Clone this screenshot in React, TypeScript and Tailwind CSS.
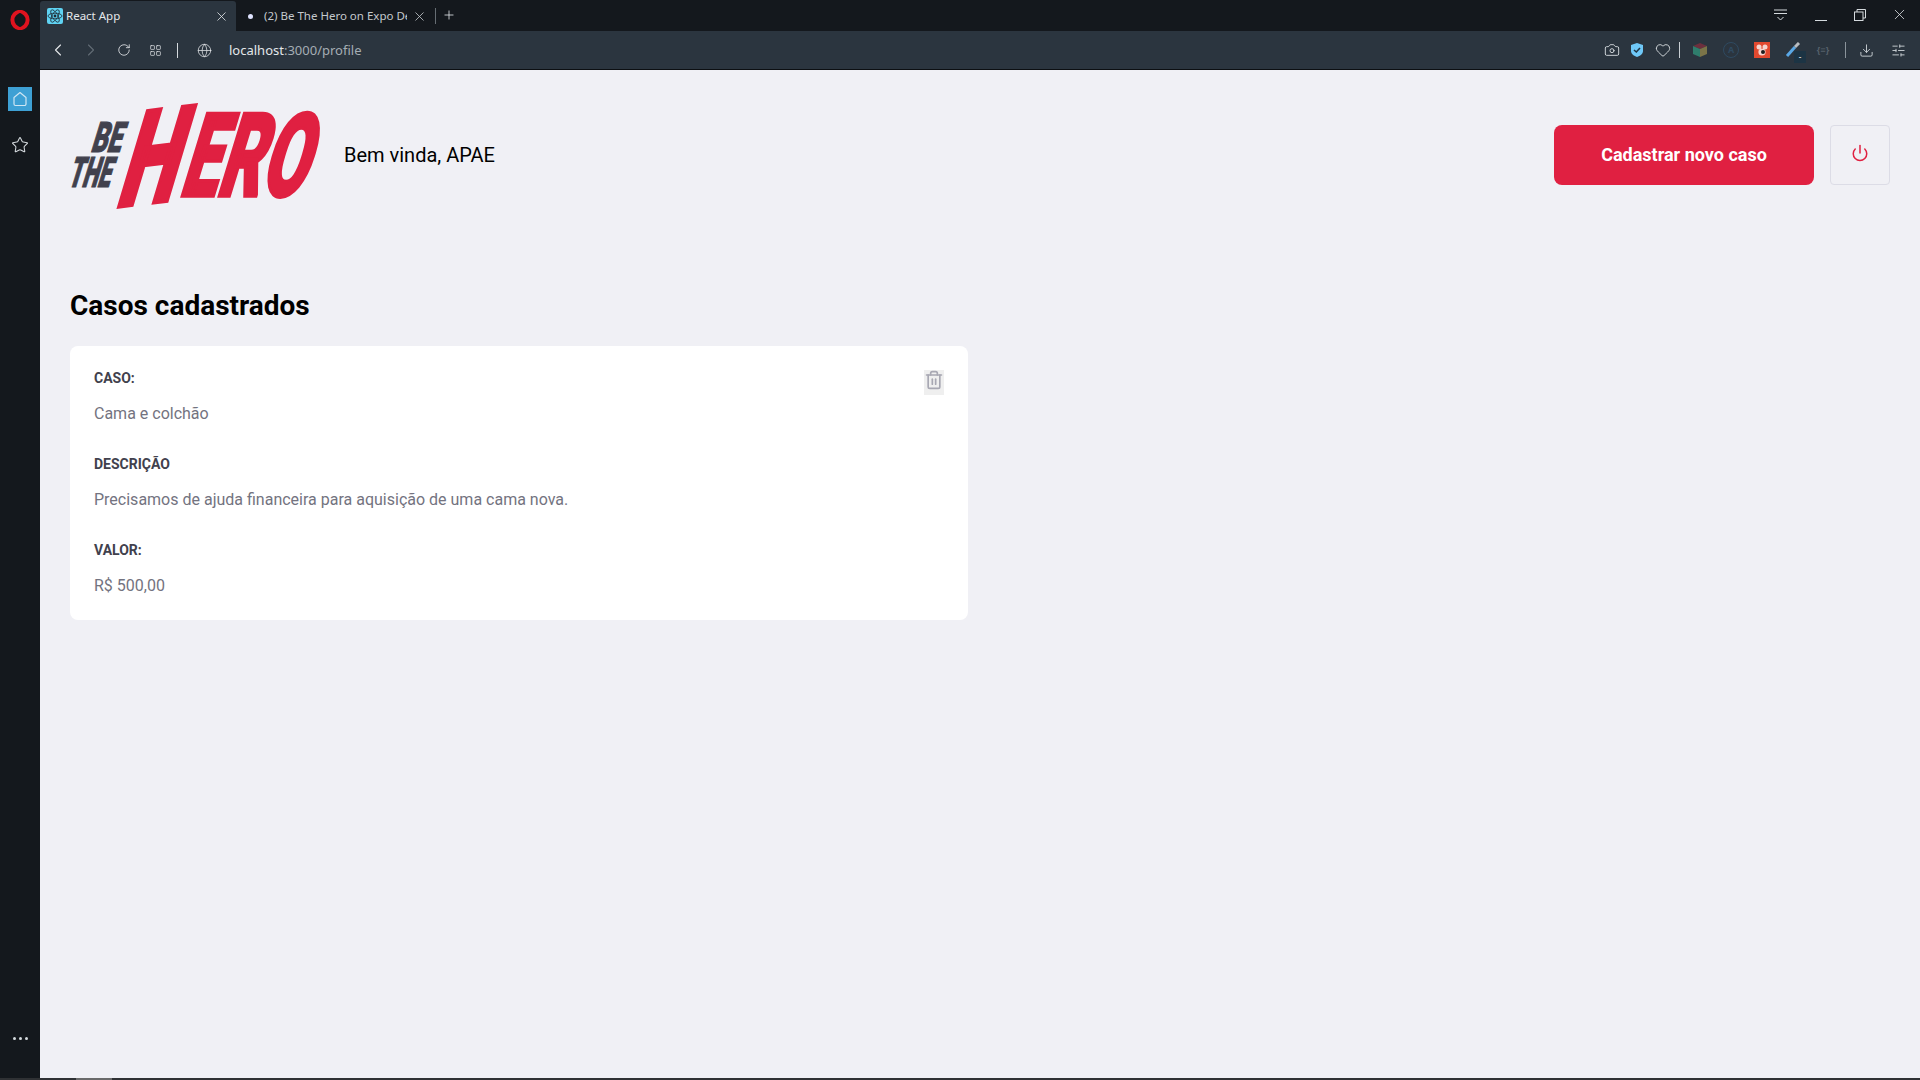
import React from "react";
import { FiPower, FiTrash2 } from "react-icons/fi";
import {
  Camera,
  ChevronLeft,
  ChevronRight,
  Download,
  Globe,
  Heart,
  LayoutGrid,
  Plus,
  RotateCw,
  SlidersHorizontal,
  Star,
  X,
} from "lucide-react";

const OperaLogo = () => (
  <svg width="20" height="20" viewBox="0 0 20 20">
    <ellipse cx="10" cy="10" rx="7.6" ry="8.2" fill="none" stroke="#e0131f" strokeWidth="4" />
    <ellipse cx="10" cy="10" rx="3.6" ry="7" fill="#14181d" />
  </svg>
);

const ReactFavicon = () => (
  <svg width="16" height="16" viewBox="0 0 16 16">
    <rect width="16" height="16" rx="2" fill="#5fd3f3" />
    <g fill="none" stroke="#1e2a33" strokeWidth="0.8">
      <ellipse cx="8" cy="8" rx="7" ry="2.8" />
      <ellipse cx="8" cy="8" rx="7" ry="2.8" transform="rotate(60 8 8)" />
      <ellipse cx="8" cy="8" rx="7" ry="2.8" transform="rotate(120 8 8)" />
    </g>
    <circle cx="8" cy="8" r="1.4" fill="#1e2a33" />
  </svg>
);

const Logo = () => (
  <svg width="250" height="110" viewBox="0 0 250 110" className="shrink-0 overflow-visible">
    <g fontFamily="Roboto, sans-serif" fontWeight="900">
      <text transform="translate(20 52) skewX(-17)" fontSize="42" fill="#41414d" stroke="#41414d" strokeWidth="1.2" textLength="30" lengthAdjust="spacingAndGlyphs">
        BE
      </text>
      <text transform="translate(-3 87) skewX(-17)" fontSize="42" fill="#41414d" stroke="#41414d" strokeWidth="1.2" textLength="42" lengthAdjust="spacingAndGlyphs">
        THE
      </text>
      <text transform="matrix(1 -0.12 -0.3 1 44 107)" fontSize="134" fill="#e02041" stroke="#e02041" strokeWidth="4.5" textLength="58" lengthAdjust="spacingAndGlyphs">
        H
      </text>
      <text transform="translate(108 96) skewX(-17)" fontSize="116" fill="#e02041" stroke="#e02041" strokeWidth="3.5" textLength="126" lengthAdjust="spacingAndGlyphs">
        ERO
      </text>
    </g>
  </svg>
);

const ExtensionIcons = () => (
  <div className="flex items-center">
    <Camera size={16} strokeWidth={1.4} className="text-[#d5dade]" />
    <svg width="14" height="16" viewBox="0 0 14 16" className="ml-[10px]">
      <path d="M7 1 L13 3 V9 C13 12 10 14 7 15 C4 14 1 12 1 9 V3 Z" fill="#6fc8f7" />
      <path d="M4 8 L6.3 10 L10 6" fill="none" stroke="#1f3545" strokeWidth="1.6" />
    </svg>
    <Heart size={16} strokeWidth={1.4} className="ml-[11px] text-[#d5dade]" />
    <div className="ml-[8px] h-[16px] w-px bg-[#c8ced3]" />
    <svg width="16" height="16" viewBox="0 0 16 16" className="ml-[12px]">
      <path d="M8 1 L15 4 L8 7 L1 4 Z" fill="#6d2f3d" />
      <path d="M1 4 L8 7 V15 L1 12 Z" fill="#2f7d6c" />
      <path d="M15 4 L8 7 V15 L15 12 Z" fill="#7a7448" />
    </svg>
    <div className="ml-[15px] flex h-[16px] w-[16px] items-center justify-center rounded-full border border-[#2f4a61] text-[9px] font-bold text-[#2f4a61]">
      A
    </div>
    <svg width="16" height="16" viewBox="0 0 16 16" className="ml-[15px]">
      <rect width="16" height="16" fill="#e2492f" />
      <circle cx="5" cy="5" r="2.5" fill="#f5d5cf" />
      <circle cx="11" cy="5" r="2.5" fill="#f5d5cf" />
      <circle cx="8" cy="10" r="3.6" fill="#f5d5cf" />
      <circle cx="9" cy="10" r="2" fill="#1d1d1d" />
    </svg>
    <div className="relative ml-[15px] h-[16px] w-[16px]">
      <svg width="16" height="16" viewBox="0 0 16 16">
        <path d="M2 14 L10 5" stroke="#5aa8e6" strokeWidth="3" />
        <path d="M10 5 L14 1" stroke="#b8bcc0" strokeWidth="3" />
      </svg>
      <div className="absolute left-[9px] top-[9px] flex h-[12px] w-[12px] items-center justify-center bg-[#1c3444] text-[8px] leading-none text-white">
        -
      </div>
    </div>
    <span className="ml-[15px] w-[14px] text-center text-[9px] font-bold text-[#56616b]">{"{≡}"}</span>
    <div className="ml-[15px] h-[16px] w-px bg-[#8b949b]" />
    <Download size={15} strokeWidth={1.4} className="ml-[13px] text-[#d5dade]" />
    <SlidersHorizontal size={15} strokeWidth={1.4} className="ml-[17px] text-[#d5dade]" />
  </div>
);

const BrowserChrome = () => (
  <div className="font-['Noto_Sans',sans-serif] text-[#e4e7ea]">
    <div className="flex h-[31px] items-end bg-[#14181d]">
      <div className="flex h-[30px] w-[196px] items-center rounded-t-[3px] bg-[#2b353f] pl-[7px] pr-[7px] text-[11.5px]">
        <ReactFavicon />
        <span className="ml-[3px] flex-1">React App</span>
        <X size={15} strokeWidth={1.3} />
      </div>
      <div className="flex h-[30px] w-[196px] items-center pl-[12px] pr-[5px] text-[11.5px] text-[#c4c9cd]">
        <div className="h-[5px] w-[5px] rounded-full bg-[#dfe3ff]" />
        <span className="ml-[11px] w-[143px] overflow-hidden whitespace-nowrap">(2) Be The Hero on Expo De</span>
        <X size={15} strokeWidth={1.3} className="ml-[5px]" />
      </div>
      <div className="mb-[7px] ml-[3px] h-[16px] w-px bg-[#666d73]" />
      <Plus size={14} strokeWidth={1.4} className="mb-[9px] ml-[6px]" />
      <div className="mb-[8px] ml-auto flex items-center">
        <svg width="15" height="12" viewBox="0 0 15 12" fill="none" stroke="#d5dade" strokeWidth="1">
          <path d="M1 1 H14 M1 4.5 H14 M4.5 8 L7.5 11 L10.5 8" />
        </svg>
        <div className="ml-[27px] mt-[12px] h-px w-[12px] bg-[#d5dade]" />
        <svg width="12" height="12" viewBox="0 0 12 12" fill="none" stroke="#d5dade" strokeWidth="1" className="ml-[27px]">
          <rect x="0.5" y="3" width="8.5" height="8.5" />
          <path d="M3 3 V0.5 H11.5 V9 H9" />
        </svg>
        <X size={17} strokeWidth={1.1} className="ml-[25px] mr-[12px]" />
      </div>
    </div>
    <div className="flex h-[39px] items-center border-b border-[#0c0f12] bg-[#2b353f] pr-[14px]">
      <ChevronLeft size={20} strokeWidth={1.3} className="ml-[8px]" />
      <ChevronRight size={20} strokeWidth={1.3} className="ml-[13px] text-[#626c75]" />
      <RotateCw size={14} strokeWidth={1.4} className="ml-[16px]" />
      <LayoutGrid size={13} strokeWidth={1.3} className="ml-[18px]" />
      <div className="ml-[15px] h-[15px] w-px bg-[#d5dade]" />
      <Globe size={15} strokeWidth={1.2} className="ml-[19px]" />
      <span className="ml-[17px] mt-[1px] text-[13px]">
        localhost<span className="text-[#a5adb4]">:3000/profile</span>
      </span>
      <div className="ml-auto">
        <ExtensionIcons />
      </div>
    </div>
  </div>
);

const Sidebar = () => (
  <div className="flex w-[40px] shrink-0 flex-col items-center bg-[#14181d]">
    <div className="mt-[10px]">
      <OperaLogo />
    </div>
    <div className="mt-[57px] flex h-[24px] w-[24px] items-center justify-center bg-[#3ea0d4]">
      <svg width="16" height="16" viewBox="0 0 16 16" fill="none" stroke="#cfe6f3" strokeWidth="1.2">
        <path d="M8 1.5 L14 6.5 V13 A1.5 1.5 0 0 1 12.5 14.5 H3.5 A1.5 1.5 0 0 1 2 13 V6.5 Z" strokeLinejoin="round" />
      </svg>
    </div>
    <Star size={18} strokeWidth={1.4} className="mt-[25px] text-[#d5dade]" />
    <div className="mt-auto mb-[38px] flex gap-[3px]">
      <div className="h-[3px] w-[3px] rounded-full bg-[#d5dade]" />
      <div className="h-[3px] w-[3px] rounded-full bg-[#d5dade]" />
      <div className="h-[3px] w-[3px] rounded-full bg-[#d5dade]" />
    </div>
  </div>
);

const Field = ({ label, value, last }: { label: string; value: string; last?: boolean }) => (
  <div className={last ? "" : "mb-[32px]"}>
    <strong className="mb-[16px] block text-[14px] leading-[17px] font-bold text-[#41414d]">{label}</strong>
    <p className="text-[16px] leading-[21px] text-[#737380]">{value}</p>
  </div>
);

const Profile = () => (
  <div className="flex-1 bg-[#f0f0f5] px-[30px] pt-[30px] font-['Roboto',sans-serif]">
    <header className="flex h-[110px] items-center">
      <Logo />
      <span className="ml-[24px] text-[20px] text-black">Bem vinda, APAE</span>
      <button className="ml-auto h-[60px] w-[260px] rounded-[8px] bg-[#e02041] pb-[2px] text-[18px] font-bold text-white">
        Cadastrar novo caso
      </button>
      <button className="ml-[16px] flex h-[60px] w-[60px] items-center justify-center rounded-[4px] border border-[#dcdce6] pb-[5px]">
        <FiPower size={18} color="#e02041" />
      </button>
    </header>

    <h1 className="mt-[79px] mb-[24px] text-[28px] leading-[33px] font-bold text-black">Casos cadastrados</h1>

    <div className="relative w-[898px] rounded-[8px] bg-white p-[24px]">
      <button className="absolute right-[24px] top-[24px] flex h-[25px] w-[20px] items-start justify-center bg-[#efefef]">
        <FiTrash2 size={20} color="#a8a8b3" />
      </button>
      <Field label="CASO:" value="Cama e colchão" />
      <Field label="DESCRIÇÃO" value="Precisamos de ajuda financeira para aquisição de uma cama nova." />
      <Field label="VALOR:" value="R$ 500,00" last />
    </div>
  </div>
);

export default function App() {
  return (
    <div className="flex h-screen w-full flex-col overflow-hidden">
      <div className="flex min-h-0 flex-1">
        <Sidebar />
        <div className="flex flex-1 flex-col">
          <BrowserChrome />
          <Profile />
        </div>
      </div>
      <div className="h-[2px] shrink-0 bg-[#2f3134] pl-[76px]">
        <div className="h-full w-[36px] bg-[#6a6a6a]" />
      </div>
    </div>
  );
}
